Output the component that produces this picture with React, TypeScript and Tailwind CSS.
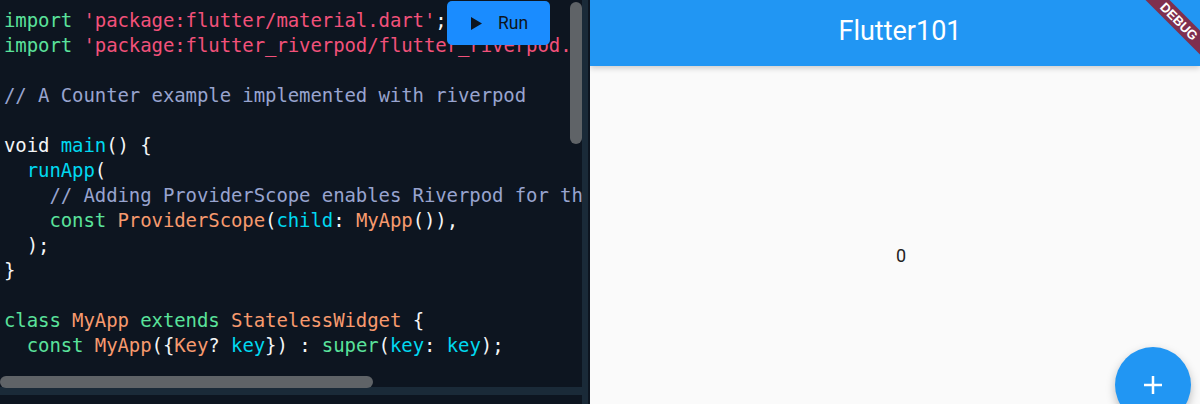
import React from "react";

const G = "text-[#5ae29b]";
const R = "text-[#f2517a]";
const C = "text-[#98a4cf]";
const B = "text-[#00d8f0]";
const O = "text-[#f79a6e]";

type Seg = [string, string?];
const lines: Seg[][] = [
  [["import", G], [" "], ["'package:flutter/material.dart'", R], [";"]],
  [["import", G], [" "], ["'package:flutter_riverpod/flutter_riverpod.", R]],
  [],
  [["// A Counter example implemented with riverpod", C]],
  [],
  [["void "], ["main", B], ["() {"]],
  [["  "], ["runApp", B], ["("]],
  [["    "], ["// Adding ProviderScope enables Riverpod for th", C]],
  [["    "], ["const", G], [" "], ["ProviderScope", O], ["("], ["child", B], [": "], ["MyApp", O], ["()),"]],
  [["  );"]],
  [["}"]],
  [],
  [["class", G], [" "], ["MyApp", O], [" "], ["extends", G], [" "], ["StatelessWidget", O], [" {"]],
  [["  "], ["const", G], [" "], ["MyApp", O], ["({"], ["Key", O], ["? "], ["key", B], ["}) : "], ["super", G], ["("], ["key", B], [": "], ["key", B], [");"]],
];

export default function App() {
  return (
    <div className="flex h-[404px] w-[1200px] overflow-hidden bg-[#fafafa]">
      <div className="relative flex h-full w-[590px] shrink-0 bg-[#0d1520]">
        <div className="flex h-full w-[582px] flex-col">
          <div className="h-[387px] overflow-hidden pl-1 pt-[8px] font-['DejaVu_Sans_Mono',monospace] text-[19px] leading-[25px] tracking-[-0.09px] text-[#f4f5f7]">
            {lines.map((l, i) => (
              <div key={i} className="h-[25px] whitespace-pre">
                {l.map((s, j) => (
                  <span key={j} className={s[1]}>
                    {s[0]}
                  </span>
                ))}
              </div>
            ))}
          </div>
          <div className="h-2 bg-[#1a2a38]" />
        </div>
        <div className="h-full w-[6px] bg-[#1a2a38]" />
        <button className="absolute left-[447px] top-[1px] flex h-[44px] w-[103px] items-center rounded-[5px] bg-[#1a8cff] pl-[24px] font-['Roboto',sans-serif] text-[17.5px] text-[#0d1520]">
          <svg width="11" height="13" viewBox="0 0 11 13" className="mr-[16px]">
            <path d="M0 0 L11 6.5 L0 13 Z" fill="#0d1520" />
          </svg>
          Run
        </button>
        <div className="absolute left-[570px] top-[2px] h-[142px] w-[12px] rounded-[6px] bg-[#5f6367]" />
        <div className="absolute left-0 top-[376px] h-[12px] w-[373px] rounded-[6px] bg-[#5f6367]" />
      </div>
      <div className="relative flex h-full flex-1 flex-col overflow-hidden font-['Roboto',sans-serif]">
        <div className="flex h-[66px] items-center justify-center bg-[#2196f3] pb-[3px] pl-[10px] text-[27px] text-white shadow-[0_2px_6px_rgba(0,0,0,0.2)]">
          Flutter101
        </div>
        <div className="flex flex-1 items-center justify-center pl-[12px] pt-[40px] text-[18px] text-[#222]">0</div>
        <div className="absolute left-[525px] top-[347px] flex h-[76px] w-[76px] items-center justify-center rounded-full bg-[#2196f3] shadow-[0_4px_10px_rgba(0,0,0,0.25)]">
          <svg width="20" height="20" viewBox="0 0 20 20">
            <path d="M10 1 V19 M1 10 H19" stroke="#fff" strokeWidth="2.5" />
          </svg>
        </div>
        <div className="absolute right-[-44px] top-[13px] w-[130px] rotate-45 bg-[#7f2f4e] py-[1px] text-center font-['Liberation_Sans',sans-serif] text-[13px] font-bold leading-[15px] text-white">
          DEBUG
        </div>
      </div>
    </div>
  );
}
